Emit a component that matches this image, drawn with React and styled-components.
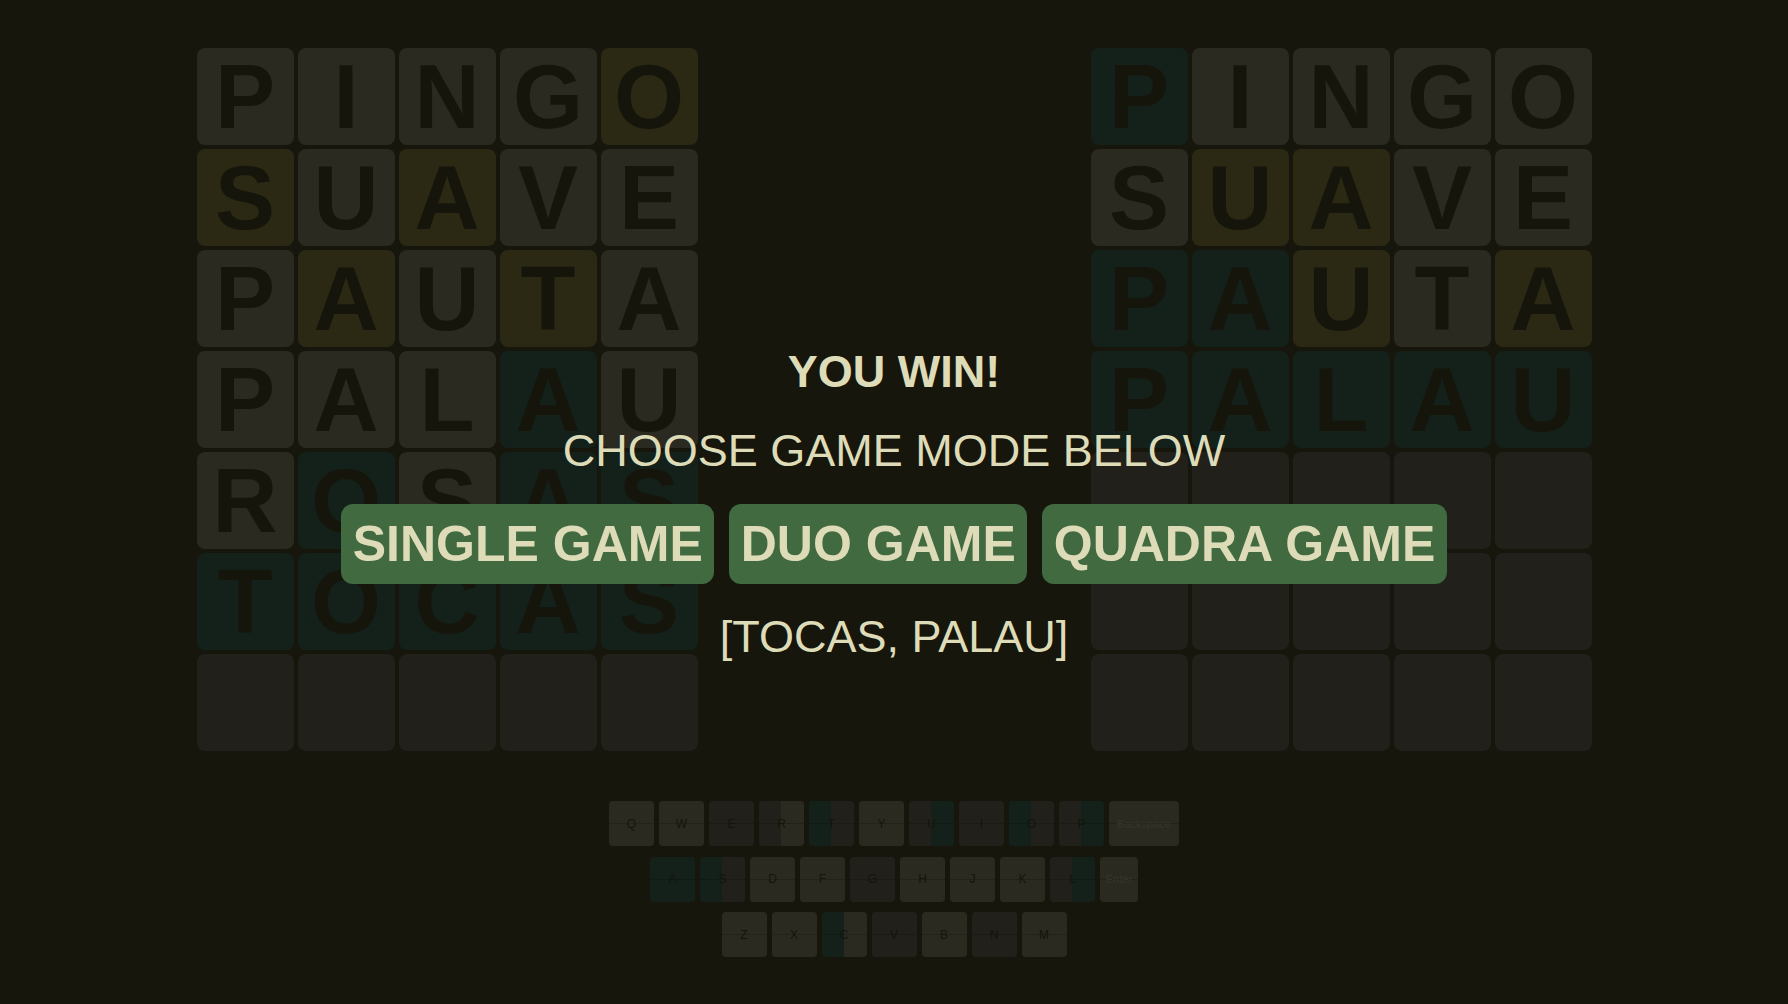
import React from "react";
import styled, { createGlobalStyle } from "styled-components";

const GlobalStyle = createGlobalStyle`
  body {
    margin: 0;
    background: #17160c;
    font-family: "Liberation Sans", Arial, sans-serif;
  }
`;

const tileColors = {
  gray: "#2b2a20",
  yellow: "#2b2913",
  green: "#13211a",
  empty: "#21201a",
};

const keyColors = {
  u: "#2b2a20",
  a: "#21201a",
  g: "#13211a",
};

const Page = styled.div`
  position: relative;
  min-height: 100vh;
  padding-top: 48px;
  box-sizing: border-box;
`;

const Boards = styled.div`
  display: flex;
  justify-content: space-around;
`;

const Board = styled.div`
  display: grid;
  grid-template-columns: repeat(5, 97px);
  grid-auto-rows: 97px;
  gap: 4px;
`;

const Tile = styled.div`
  display: flex;
  align-items: center;
  justify-content: center;
  border-radius: 8px;
  background: ${(p) => tileColors[p.$state]};
  color: #16150c;
  font-size: 90px;
  font-weight: 700;
  line-height: 1;
`;

const Keyboard = styled.div`
  display: flex;
  flex-direction: column;
  align-items: center;
  gap: 10.5px;
  margin-top: 50px;
`;

const KeyRow = styled.div`
  display: flex;
  gap: 5px;
`;

const Key = styled.div`
  display: flex;
  align-items: center;
  justify-content: center;
  width: ${(p) => p.$w || 45}px;
  height: 45px;
  box-sizing: border-box;
  border-radius: 4px;
  background:
    linear-gradient(180deg, transparent calc(50% - 0.5px), rgba(0, 0, 0, 0.18) calc(50% - 0.5px), rgba(0, 0, 0, 0.18) calc(50% + 0.5px), transparent calc(50% + 0.5px)),
    linear-gradient(90deg, ${(p) => keyColors[p.$l]} 50%, ${(p) => keyColors[p.$r]} 50%);
  color: ${(p) => (p.$w ? "#36352b" : "#15140b")};
  font-size: ${(p) => (p.$w ? "11px" : "12px")};
`;

const Overlay = styled.div`
  position: absolute;
  top: 0;
  left: 0;
  right: 0;
  height: 100vh;
  padding-top: 3px;
  box-sizing: border-box;
  display: flex;
  flex-direction: column;
  align-items: center;
  justify-content: center;
  color: #dedcb8;
`;

const Title = styled.div`
  font-size: 45px;
  font-weight: 700;
  line-height: 1;
  margin-bottom: 34px;
`;

const Subtitle = styled.div`
  font-size: 45px;
  line-height: 1;
  margin-bottom: ${(p) => p.$gap}px;
`;

const Modes = styled.div`
  display: flex;
  gap: 15px;
  margin-bottom: 30px;
`;

const ModeButton = styled.button`
  height: 80px;
  padding: 0 11.5px;
  border: none;
  border-radius: 12px;
  background: #426a40;
  color: #dedcb8;
  font-family: inherit;
  font-size: 50px;
  font-weight: 700;
  cursor: pointer;
`;

const leftBoard = [
  ["PINGO", "ggggy"],
  ["SUAVE", "ygygg"],
  ["PAUTA", "gygyg"],
  ["PALAU", "gggcg"],
  ["ROSAS", "gcgcc"],
  ["TOCAS", "ccccc"],
];

const rightBoard = [
  ["PINGO", "cgggg"],
  ["SUAVE", "gyygg"],
  ["PAUTA", "ccygy"],
  ["PALAU", "ccccc"],
];

const code = { g: "gray", y: "yellow", c: "green" };

const wideKeys = { Backspace: 70, Enter: 38 };

function GameBoard({ rows }) {
  const tiles = [];
  for (let r = 0; r < 7; r++) {
    for (let c = 0; c < 5; c++) {
      const row = rows[r];
      tiles.push(
        <Tile key={`${r}-${c}`} $state={row ? code[row[1][c]] : "empty"}>
          {row ? row[0][c] : ""}
        </Tile>
      );
    }
  }
  return <Board>{tiles}</Board>;
}

// letter, left board state, right board state (u unused, a absent, g correct)
const keyRows = [
  [["Q", "u", "u"], ["W", "u", "u"], ["E", "a", "a"], ["R", "a", "u"], ["T", "g", "a"], ["Y", "u", "u"], ["U", "a", "g"], ["I", "a", "a"], ["O", "g", "a"], ["P", "a", "g"], ["Backspace", "u", "u"]],
  [["A", "g", "g"], ["S", "g", "a"], ["D", "u", "u"], ["F", "u", "u"], ["G", "a", "a"], ["H", "u", "u"], ["J", "u", "u"], ["K", "u", "u"], ["L", "a", "g"], ["Enter", "u", "u"]],
  [["Z", "u", "u"], ["X", "u", "u"], ["C", "g", "u"], ["V", "a", "a"], ["B", "u", "u"], ["N", "a", "a"], ["M", "u", "u"]],
];

export default function App() {
  return (
    <>
      <GlobalStyle />
      <Page>
        <Boards>
          <GameBoard rows={leftBoard} />
          <GameBoard rows={rightBoard} />
        </Boards>
        <Keyboard>
          {keyRows.map((row, i) => (
            <KeyRow key={i}>
              {row.map(([k, l, r]) => (
                <Key key={k} $l={l} $r={r} $w={wideKeys[k]}>
                  {k}
                </Key>
              ))}
            </KeyRow>
          ))}
        </Keyboard>
        <Overlay>
          <Title>YOU WIN!</Title>
          <Subtitle $gap={31}>CHOOSE GAME MODE BELOW</Subtitle>
          <Modes>
            <ModeButton>SINGLE GAME</ModeButton>
            <ModeButton>DUO GAME</ModeButton>
            <ModeButton>QUADRA GAME</ModeButton>
          </Modes>
          <Subtitle $gap={0}>[TOCAS, PALAU]</Subtitle>
        </Overlay>
      </Page>
    </>
  );
}
